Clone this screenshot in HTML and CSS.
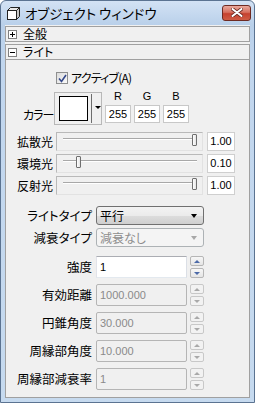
FILE: index.html
```html
<!DOCTYPE html>
<html lang="ja">
<head>
<meta charset="utf-8">
<link rel="stylesheet" href="styles.css">
</head>
<body>
<div class="window">
  <div class="titlebar">
    <svg class="appicon" width="13" height="13" viewBox="0 0 13 13">
      <path d="M0.5 3.5 L3.5 0.5 L12.5 0.5 L9.5 3.5 Z" fill="#e8e8e8" stroke="#222"/>
      <path d="M9.5 3.5 L12.5 0.5 L12.5 9.5 L9.5 12.5 Z" fill="#c8c8c8" stroke="#222"/>
      <rect x="0.5" y="3.5" width="9" height="9" fill="#fff" stroke="#222"/>
    </svg>
    <span class="title">オブジェクト ウィンドウ</span>
    <div class="close">
      <svg width="12" height="9" viewBox="0 0 12 9">
        <path d="M1.5 1 L10.5 8 M10.5 1 L1.5 8" stroke="#6b2a22" stroke-width="3.6" stroke-linecap="round"/>
        <path d="M1.5 1 L10.5 8 M10.5 1 L1.5 8" stroke="#fff" stroke-width="2" stroke-linecap="round"/>
      </svg>
    </div>
  </div>
  <div class="client">
    <div class="section">
      <svg class="pm" width="9" height="9" viewBox="0 0 9 9"><rect x="0.5" y="0.5" width="8" height="8" fill="#fff" stroke="#808080"/><path d="M2 4.5 H7 M4.5 2 V7" stroke="#000"/></svg>
      <span>全般</span>
    </div>
    <div class="section">
      <svg class="pm" width="9" height="9" viewBox="0 0 9 9"><rect x="0.5" y="0.5" width="8" height="8" fill="#fff" stroke="#808080"/><path d="M2 4.5 H7" stroke="#000"/></svg>
      <span>ライト</span>
    </div>
    <div class="panel">
      <div class="checkrow">
        <span class="checkbox">
          <svg width="9" height="9" viewBox="0 0 9 9"><path d="M1 4.5 L3.5 7.5 L8 1" fill="none" stroke="#34488a" stroke-width="1.6"/></svg>
        </span>
        <span class="checktext">アクティブ(A)</span>
      </div>
      <div class="colorrow">
        <span class="colorlabel">カラー</span>
        <div class="swatchbtn">
          <span class="swatch"></span>
          <span class="divider"></span>
          <span class="tri"></span>
        </div>
        <div class="rgb">
          <span class="rgblabel num">R</span>
          <span class="rgblabel num">G</span>
          <span class="rgblabel num">B</span>
          <span class="rgbbox num">255</span>
          <span class="rgbbox num">255</span>
          <span class="rgbbox num">255</span>
        </div>
      </div>
      <div class="sliders">
        <div class="sliderrow">
          <span class="slabel">拡散光</span>
          <div class="slider"><span class="track"></span><span class="thumb" style="--v:1"></span></div>
          <span class="sval num">1.00</span>
        </div>
        <div class="sliderrow">
          <span class="slabel">環境光</span>
          <div class="slider"><span class="track"></span><span class="thumb" style="--v:0.1"></span></div>
          <span class="sval num">0.10</span>
        </div>
        <div class="sliderrow">
          <span class="slabel">反射光</span>
          <div class="slider"><span class="track"></span><span class="thumb" style="--v:1"></span></div>
          <span class="sval num">1.00</span>
        </div>
      </div>
      <div class="combos">
        <div class="formrow">
          <span class="flabel">ライトタイプ</span>
          <div class="combo"><span>平行</span><span class="ctri"></span></div>
        </div>
        <div class="formrow">
          <span class="flabel">減衰タイプ</span>
          <div class="combo disabled"><span>減衰なし</span><span class="ctri"></span></div>
        </div>
      </div>
      <div class="spins">
        <div class="spinrow">
          <span class="flabel">強度</span>
          <div class="input num">1</div>
          <div class="spinbtns"><span class="sb up"></span><span class="sb down"></span></div>
        </div>
        <div class="spinrow">
          <span class="flabel">有効距離</span>
          <div class="input num disabled">1000.000</div>
          <div class="spinbtns off"><span class="sb up"></span><span class="sb down"></span></div>
        </div>
        <div class="spinrow">
          <span class="flabel">円錐角度</span>
          <div class="input num disabled">30.000</div>
          <div class="spinbtns off"><span class="sb up"></span><span class="sb down"></span></div>
        </div>
        <div class="spinrow">
          <span class="flabel">周縁部角度</span>
          <div class="input num disabled">10.000</div>
          <div class="spinbtns off"><span class="sb up"></span><span class="sb down"></span></div>
        </div>
        <div class="spinrow">
          <span class="flabel">周縁部減衰率</span>
          <div class="input num disabled">1</div>
          <div class="spinbtns off"><span class="sb up"></span><span class="sb down"></span></div>
        </div>
      </div>
    </div>
  </div>
</div>
</body>
</html>
```
FILE: styles.css
```css
* { box-sizing: border-box; }
html, body { margin: 0; padding: 0; }
body {
  width: 255px;
  height: 403px;
  overflow: hidden;
  font-family: "Noto Sans CJK JP", sans-serif;
  font-feature-settings: "palt";
  font-size: 12px;
  color: #000;
  background: #fff;
}
.num {
  font-family: "Liberation Sans", sans-serif;
  font-feature-settings: normal;
  font-size: 11px;
}
.window {
  width: 255px;
  height: 403px;
  border: 1px solid #5b7391;
  border-radius: 6px 6px 0 0;
  background: linear-gradient(#d3e2f4, #b9d0ea 24px, #c1d6ee 60px, #c6daef);
  display: flex;
  flex-direction: column;
}
.titlebar {
  height: 24px;
  flex: none;
  display: flex;
  align-items: center;
  padding: 0 3px 0 6px;
}
.appicon { display: block; margin-top: 1px; }
.title {
  margin-left: 5px;
  line-height: 16px;
  font-size: 13.5px;
  white-space: nowrap;
}
.close {
  margin-left: auto;
  width: 29px;
  height: 16px;
  margin-top: -1px;
  border: 1px solid #6e2a22;
  border-radius: 3px;
  background: linear-gradient(#e9a99d, #d7705f 45%, #c5412f 55%, #cf5c44);
  display: flex;
  align-items: center;
  justify-content: center;
}
.close svg { display: block; }
.client {
  flex: 1;
  margin: 0 4px 4px 4px;
  background: #f0f0f0;
  padding-top: 1px;
  display: flex;
  flex-direction: column;
}
.section {
  height: 16px;
  flex: none;
  border: 1px solid #a0a0a0;
  background: #f0f0f0;
  display: flex;
  align-items: center;
  padding-left: 2px;
  line-height: 14px;
}
.section + .section { margin-top: 2px; }
.pm { display: block; margin-right: 6px; }
.panel {
  flex: 1;
  border: 1px solid #a0a0a0;
  border-top: 0;
  display: flex;
  flex-direction: column;
}
.checkrow {
  margin-top: 11px;
  margin-left: 50px;
  height: 14px;
  display: flex;
  align-items: center;
  line-height: 14px;
}
.checktext { letter-spacing: -0.8px; }
.checkbox {
  width: 12px;
  height: 12px;
  border: 1px solid #8e8f8f;
  background: linear-gradient(135deg, #dcdcdc, #fafafa);
  display: flex;
  align-items: center;
  justify-content: center;
  margin-right: 3px;
}
.checkbox svg { display: block; }
.colorrow {
  margin-top: 5px;
  display: flex;
  align-items: flex-end;
  height: 35px;
}
.colorlabel {
  flex: none;
  margin-left: 17px;
  width: 31px;
  line-height: 14px;
  margin-bottom: 3px;
  white-space: nowrap;
  letter-spacing: -1px;
}
.swatchbtn {
  flex: none;
  width: 48px;
  height: 33px;
  border: 1px solid #b8b8b8;
  background: #f0f0f0;
  display: flex;
  align-items: center;
  padding-left: 4px;
}
.swatch {
  width: 29px;
  height: 25px;
  background: #fff;
  border: 1px solid #000;
}
.divider {
  width: 1px;
  height: 29px;
  background: #6d6d6d;
  margin-left: 3px;
}
.tri {
  width: 0;
  height: 0;
  border-left: 3px solid transparent;
  border-right: 3px solid transparent;
  border-top: 3px solid #000;
  margin-left: 3px;
  margin-bottom: 3px;
}
.rgb {
  margin-left: 3px;
  display: grid;
  grid-template-columns: 26px 26px 26px;
  grid-template-rows: 14px 18px;
  column-gap: 3px;
  row-gap: 2px;
  margin-bottom: 2px;
}
.rgblabel {
  text-align: center;
  line-height: 14px;
}
.rgbbox {
  border: 1px solid #c8c8c8;
  background: #fff;
  text-align: center;
  line-height: 16px;
}
.sliders {
  margin-top: 7px;
  display: flex;
  flex-direction: column;
  gap: 3px;
}
.sliderrow {
  display: flex;
  align-items: center;
  height: 19px;
}
.slabel {
  flex: none;
  margin-left: 11px;
  width: 39px;
  line-height: 14px;
  white-space: nowrap;
}
.slider {
  position: relative;
  width: 147px;
  height: 19px;
  border: 1px solid #b9b9b9;
  border-right-color: #e2e2e2;
  border-bottom-color: #e2e2e2;
  background: #f0f0f0;
}
.track {
  position: absolute;
  left: 6px;
  right: 5px;
  top: 5px;
  height: 2px;
  border-top: 1px solid #a8a8a8;
  border-bottom: 1px solid #fff;
}
.thumb {
  position: absolute;
  top: 1px;
  left: calc(6px + var(--v) * 129px);
  width: 5px;
  height: 12px;
  border: 1px solid #6f6f6f;
  border-radius: 1px;
  background: linear-gradient(90deg, #fff, #e4e4e4);
}
.sval {
  margin-left: 4px;
  width: 28px;
  height: 19px;
  border: 1px solid #cfcfcf;
  background: #fff;
  text-align: center;
  line-height: 17px;
}
.combos {
  margin-top: 11px;
  display: flex;
  flex-direction: column;
  gap: 3px;
}
.formrow {
  display: flex;
  align-items: center;
  height: 19px;
}
.flabel {
  flex: none;
  width: 86px;
  text-align: right;
  margin-right: 4px;
  line-height: 14px;
  white-space: nowrap;
  font-size: 12.5px;
}
.combo {
  width: 108px;
  height: 19px;
  border: 1px solid #707070;
  border-radius: 3px;
  background: linear-gradient(#f3f3f3, #ebebeb 50%, #dddddd 51%, #cfcfcf);
  display: flex;
  align-items: center;
  padding: 0 3px 0 3px;
  line-height: 14px;
}
.ctri {
  margin-left: auto;
  width: 0;
  height: 0;
  border-left: 3.5px solid transparent;
  border-right: 3.5px solid transparent;
  border-top: 4px solid #000;
  margin-right: 3px;
}
.combo.disabled {
  border-color: #adb2b5;
  background: #f4f4f4;
  color: #8d8d8d;
}
.combo.disabled .ctri { border-top-color: #a8a8a8; }
.spins {
  margin-top: 9px;
  display: flex;
  flex-direction: column;
  gap: 6px;
}
.spinrow {
  display: flex;
  align-items: center;
  height: 22px;
}
.input {
  width: 91px;
  height: 22px;
  border: 1px solid #abadb3;
  border-right-color: #dbdfe6;
  border-bottom-color: #e3e9ef;
  border-left-color: #e2e3ea;
  background: #fff;
  padding-left: 3px;
  line-height: 20px;
  color: #000;
}
.input.disabled {
  border: 1px solid #b5b5b5;
  border-radius: 2px;
  background: #f0f0f0;
  color: #8a8a8a;
}
.spinbtns {
  margin-left: 3px;
  display: flex;
  flex-direction: column;
  gap: 2px;
}
.sb {
  width: 14px;
  height: 10px;
  border: 1px solid #b6b6b6;
  border-radius: 2px;
  background: linear-gradient(#f7f7f7, #e5e5e5);
  display: flex;
  align-items: center;
  justify-content: center;
}
.sb::after {
  content: "";
  width: 0;
  height: 0;
  border-left: 3px solid transparent;
  border-right: 3px solid transparent;
}
.sb.up::after { border-bottom: 3px solid #4c6aa8; }
.sb.down::after { border-top: 3px solid #4c6aa8; }
.spinbtns.off .sb { border-color: #c8c8c8; background: #f2f2f2; }
.spinbtns.off .sb.up::after { border-bottom-color: #a9a9a9; }
.spinbtns.off .sb.down::after { border-top-color: #a9a9a9; }
```
